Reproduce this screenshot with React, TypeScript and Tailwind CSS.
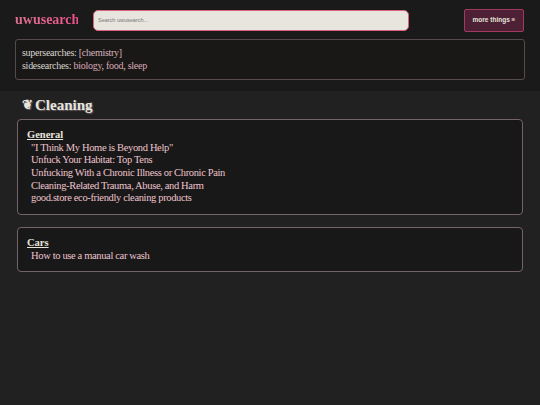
const links = ['"I Think My Home is Beyond Help"', 'Unfuck Your Habitat: Top Tens', 'Unfucking With a Chronic Illness or Chronic Pain', 'Cleaning-Related Trauma, Abuse, and Harm', 'good.store eco-friendly cleaning products'];

function Card({ title, items, className }: { title: string; items: string[]; className: string }) {
  return (
    <section className={`mx-[17px] w-[506px] rounded-[4px] border border-[#75636a] bg-[#191819] pl-[9px] pt-[9px] text-[10.5px] leading-[12.67px] ${className}`}>
      <h2 className="font-bold text-[#e8e4dc] underline">{title}</h2>
      <ul className="pl-[4px]">
        {items.map((t) => (
          <li key={t} className="tracking-[-0.35px] text-[#ecc4cc]">{t}</li>
        ))}
      </ul>
    </section>
  );
}

export default function App() {
  return (
    <div className="min-h-[405px] bg-[#212121] font-['Liberation_Serif',serif]">
      <header className="h-[91px] bg-[#1a1a1a] pt-[8px]">
        <div className="flex items-center">
          <span className="ml-[15px] w-[63px] bg-gradient-to-r from-[#d9708f] to-[#f0508c] bg-clip-text text-[14px] font-bold leading-[24px] text-transparent">uwusearch</span>
          <input
            placeholder="Search uwusearch..."
            className="ml-[15px] h-[21px] w-[316px] rounded-[5px] border border-[#d8627f] bg-[#e8e5de] px-[4px] font-['Liberation_Sans',sans-serif] text-[5.5px] text-[#555] placeholder:text-[#777] outline-none"
          />
          <button className="ml-[55px] h-[23px] w-[60px] rounded-[2px] border border-[#a23a5e] bg-[#4d2036] font-['Liberation_Sans',sans-serif] text-[6.5px] font-bold text-[#e8e4dc]">more things ≡</button>
        </div>
        <div className="mx-[15px] mt-[7px] h-[41px] w-[510px] rounded-[3px] border border-[#554a4e] bg-[#1a1817] pl-[6px] pt-[7px] text-[10px] leading-[12.6px] tracking-[-0.27px] text-[#d8d4cc]">
          <div>supersearches: <span className="text-[#d5b4bc]">[chemistry]</span></div>
          <div>sidesearches: <span className="text-[#dba9b6]">biology</span>, <span className="text-[#dba9b6]">food</span>, <span className="text-[#dba9b6]">sleep</span></div>
        </div>
      </header>
      <h1 className="ml-[22px] mt-[2px] mb-[2px] flex h-[24px] items-center gap-[2px] text-[15px] font-bold leading-[20px] text-[#e8e4dc] [text-shadow:1px_1px_1px_#6a5a60]"><span className="text-[13px]">❦</span><span>Cleaning</span></h1>
      <Card title="General" items={links} className="h-[96px]" />
      <Card title="Cars" items={['How to use a manual car wash']} className="mt-[12px] h-[45px]" />
    </div>
  );
}
